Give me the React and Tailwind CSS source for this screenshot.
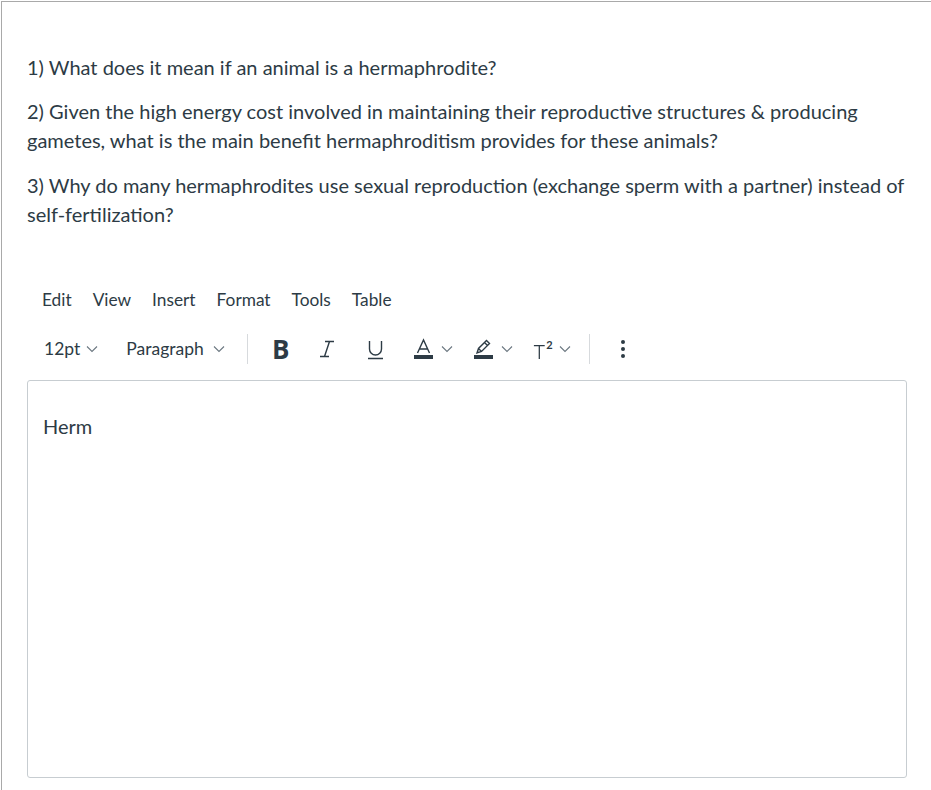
const Caret = ({ className = '' }) => (
    <svg className={className} width="12" height="8" viewBox="0 0 12 8" fill="none" stroke="#6b7780" strokeWidth="1.1">
        <path d="M1 1.5l5 5 5-5" />
    </svg>
);

const App = () => {
    return (
        <div className="w-[931px] h-[790px] bg-white overflow-hidden" style={{ fontFamily: 'Lato, "Noto Sans", sans-serif' }}>
            <div className="h-full mt-px ml-px border-t border-l border-[#a9a9a9] pl-[25px] pr-[24px] text-[#2d3b45]">
                <div className="pt-[51px] text-[20px] leading-[29px]">
                    <p className="mb-[15px]">1) What does it mean if an animal is a hermaphrodite?</p>
                    <p className="mb-[16px]">2) Given the high energy cost involved in maintaining their reproductive structures &amp; producing gametes, what is the main benefit hermaphroditism provides for these animals?</p>
                    <p>3) Why do many hermaphrodites use sexual reproduction (exchange sperm with a partner) instead of self-fertilization?</p>
                </div>

                <div className="mt-[59px] flex gap-[21px] pl-[15px] text-[17.3px] leading-[24px]">
                    <span>Edit</span>
                    <span>View</span>
                    <span>Insert</span>
                    <span>Format</span>
                    <span>Tools</span>
                    <span>Table</span>
                </div>

                <div className="mt-[22px] flex items-center h-[30px] pl-[17px] text-[17.5px]">
                    <span className="flex items-center gap-[6px]">12pt <Caret /></span>
                    <span className="flex items-center gap-[9px] ml-[28px]">Paragraph <Caret /></span>
                    <span className="w-px h-[30px] bg-[#d7dadd] ml-[22px]" />
                    <span className="ml-[24px] w-[18px] flex justify-center font-bold text-[26px] leading-none" style={{ fontFamily: '"Open Sans", sans-serif' }}>B</span>
                    <svg className="ml-[29px]" width="16" height="20" viewBox="0 0 16 20" fill="none" stroke="#2d3b45" strokeWidth="1.4">
                        <path d="M6 2.5h9M1 17.5h9M10.5 2.5 5.5 17.5" />
                    </svg>
                    <svg className="ml-[32px] mt-[2px]" width="17" height="20" viewBox="0 0 17 20" fill="none" stroke="#2d3b45" strokeWidth="1.4">
                        <path d="M2.5 1v8a6 6 0 0 0 12 0V1M1 18.5h15" />
                    </svg>
                    <svg className="ml-[30px]" width="19" height="22" viewBox="0 0 19 22" fill="none" stroke="#2d3b45" strokeWidth="1.4">
                        <path d="M3.5 15 9.5 2l6 13M5.5 11h8" />
                        <rect x="0" y="17" width="19" height="4" fill="#2d3b45" stroke="none" />
                    </svg>
                    <Caret className="ml-[8px]" />
                    <svg className="ml-[21px]" width="19" height="22" viewBox="0 0 19 22" fill="none" stroke="#2d3b45" strokeWidth="1.4">
                        <path d="M3 15l1.5-4.5 8-8 3 3-8 8-4.5 1.5zM4.5 10.5l3 3M10.5 4.5l3 3" />
                        <rect x="0" y="17" width="19" height="4" fill="#2d3b45" stroke="none" />
                    </svg>
                    <Caret className="ml-[8px]" />
                    <span className="ml-[20px] flex items-start w-[20px] leading-none">
                        <svg className="mt-[3px]" width="14" height="18" viewBox="0 0 14 18" fill="none" stroke="#2d3b45" strokeWidth="1.4">
                            <path d="M1 3h12M7 3v15" />
                        </svg>
                        <span className="text-[11px] font-bold ml-[1px]">2</span>
                    </span>
                    <Caret className="ml-[6px]" />
                    <span className="w-px h-[30px] bg-[#d7dadd] ml-[18px]" />
                    <span className="ml-[31px] flex flex-col gap-[3px]">
                        <span className="w-[4px] h-[4px] rounded-full bg-[#2d3b45]" />
                        <span className="w-[4px] h-[4px] rounded-full bg-[#2d3b45]" />
                        <span className="w-[4px] h-[4px] rounded-full bg-[#2d3b45]" />
                    </span>
                </div>

                <div className="mt-[16px] h-[398px] border border-[#c7cdd1] rounded-[3px] pt-[31px] px-[15px] text-[20px] leading-[29px]">
                    Herm
                </div>
            </div>
        </div>
    );
};

export default App;
